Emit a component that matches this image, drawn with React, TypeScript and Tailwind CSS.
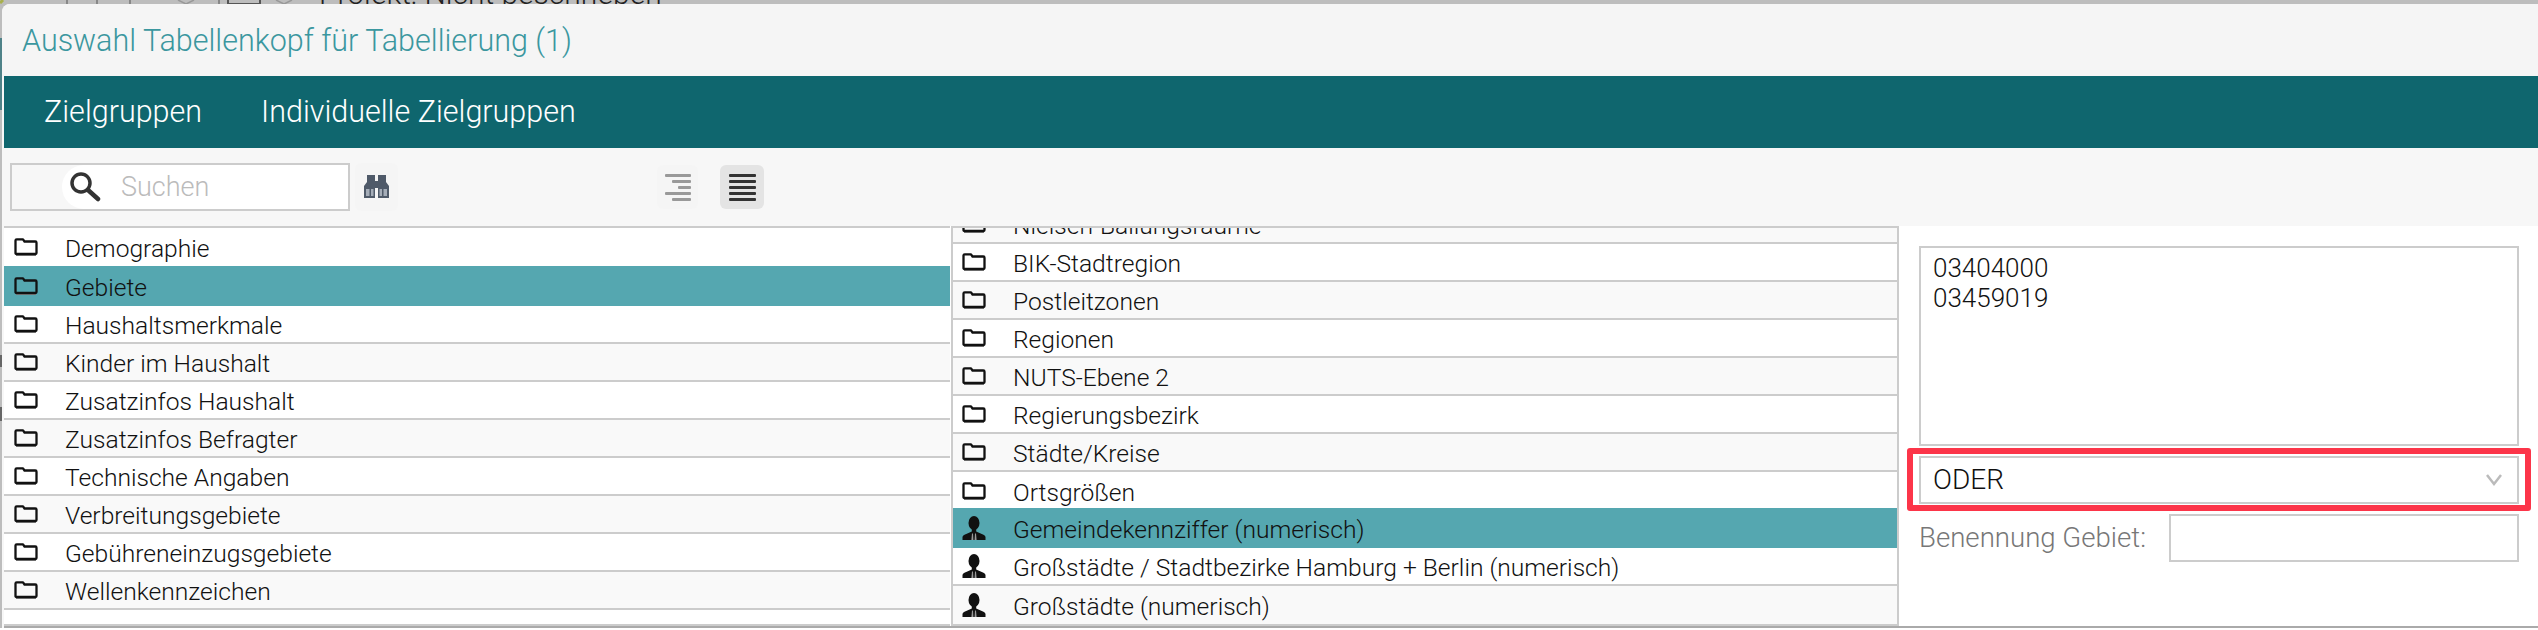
const font = "font-['Roboto','Liberation_Sans',sans-serif] font-light";

function Folder() {
  return (
    <svg width="24" height="18" viewBox="0 0 24 18" className="shrink-0" fill="none">
      <path d="M2 17.300H22" stroke="#8a8a8a" strokeWidth="1.400" />
      <path d="M1.500 15V2.500Q1.500 1.300 2.700 1.300H9L10.500 3.500H21.300Q22.500 3.500 22.500 4.700V15Q22.500 16 21.500 16H2.500Q1.500 16 1.500 15Z" stroke="#111" strokeWidth="2.300" strokeLinejoin="round" />
    </svg>
  );
}

function Person() {
  return (
    <svg width="24" height="24" viewBox="0 0 24 24" className="shrink-0" fill="#111">
      <ellipse cx="12" cy="7" rx="5.500" ry="7" />
      <path d="M9.800 12h4.400v3.500l5 2.200c2.700 1.100 4.300 2 4.300 3.300v3H.5v-3c0-1.300 1.600-2.200 4.300-3.300l5-2.200Z" />
      <path d="M10 17.500h1l.4 6.500h-2ZM13 17.500h1l.6 6.500h-2Z" fill="#9a9a9a" />
    </svg>
  );
}

function Row({ label, kind, selected, alt, last, clipped, overlap, inset }: { label: string; kind: "folder" | "person"; selected?: boolean; alt?: boolean; last?: boolean; clipped?: boolean; overlap?: boolean; inset?: boolean }) {
  const rowClass = selected
    ? "h-[40px] bg-[#55a7b0]"
    : `h-[38px] ${last ? "" : "border-b-2 border-[#cccccc]"} ${alt ? "bg-[#f9f9f9]" : "bg-white"}`;
  return (
    <div className={`flex shrink-0 items-center gap-[27px] text-[24.6px] leading-none text-[#111] ${inset ? "pl-[9px]" : "pl-[10px]"} ${rowClass} ${clipped ? "-mt-[22px]" : ""} ${overlap ? "-mt-[2px]" : ""}`}>
      {kind === "folder" ? <Folder /> : <Person />}
      <span className="whitespace-nowrap pt-[5px]">{label}</span>
    </div>
  );
}

function Binoculars() {
  return (
    <svg width="27" height="26" viewBox="0 0 27 26" fill="#4f5a69">
      <path d="M4 1h8v6h3V1h8v7l3 4v12H15V14h-3v10H1V12l3-4Z" />
      <path d="M3 15h3.500v7H3ZM8 15h2.500v7H8ZM16.500 15H19v7h-2.500ZM20.500 15H24v7h-3.500Z" fill="#a5adb8" />
    </svg>
  );
}

function Lines({ starts, color }: { starts: string[]; color: string }) {
  return (
    <div className="flex w-[27px] flex-col items-end gap-[3px]">
      {starts.map((w, i) => (
        <div key={i} className={`h-[3px] rounded-[1px] ${w} ${color}`} />
      ))}
    </div>
  );
}

const leftRows = [
  "Haushaltsmerkmale",
  "Kinder im Haushalt",
  "Zusatzinfos Haushalt",
  "Zusatzinfos Befragter",
  "Technische Angaben",
  "Verbreitungsgebiete",
  "Gebühreneinzugsgebiete",
  "Wellenkennzeichen",
];

const midRows = ["BIK-Stadtregion", "Postleitzonen", "Regionen", "NUTS-Ebene 2", "Regierungsbezirk", "Städte/Kreise"];

export default function App() {
  return (
    <div className={`flex h-[630px] w-[2538px] flex-col overflow-hidden bg-[#bdbdbd] ${font}`}>
      {/* window behind the dialog, only its lowest pixels show */}
      <div className="flex h-[4px] shrink-0 items-start overflow-hidden">
        <svg width="319" height="4" viewBox="0 0 319 4" className="shrink-0" fill="none" stroke="#777" strokeWidth="1.500">
          <path d="M0 3L3 0" stroke="#a8b04c" strokeWidth="3" />
          <path d="M67 0V4M97 0V4M130 0V4M219 0V4" />
          <path d="M178 0l8 4 8-4M276 0l8 4 8-4" stroke="#999" />
          <path d="M228 0V4H260V0" stroke="#555" strokeWidth="2" />
        </svg>
        <span className="-mt-[21px] whitespace-nowrap text-[30px] leading-[30px] text-[#222]">Projekt: Nicht beschrieben</span>
      </div>
      <div className="flex flex-1 overflow-hidden">
        <div className="flex w-[2px] shrink-0 flex-col">
          <div className="mt-[34px] h-[72px] bg-[#4f8288]" />
          <div className="mt-[245px] h-[12px] bg-[#666666]" />
          <div className="mt-[40px] h-[14px] bg-[#666666]" />
        </div>
        <div className="flex flex-1 flex-col overflow-hidden rounded-tl-[8px] bg-[#f7f7f7] pl-[2px]">
          <div className="-ml-[2px] flex h-[72px] shrink-0 items-center bg-[#f5f5f5] pl-[20px] pt-[2px] text-[30.500px] text-[#3b979f]">Auswahl Tabellenkopf für Tabellierung (1)</div>
          <div className="flex h-[72px] shrink-0 items-center gap-[59px] bg-[#0f666e] pl-[40px] text-[30.500px] text-white">
            <span>Zielgruppen</span>
            <span>Individuelle Zielgruppen</span>
          </div>
          <div className="flex h-[78px] shrink-0 items-center bg-[#f7f7f7] pl-[6px]">
            <div className="flex h-[48px] w-[340px] items-stretch border-2 border-[#cccccc] bg-[#f7f7f7]">
              <div className="ml-[50px] flex flex-1 items-center gap-[20px] rounded-l-[24px] bg-white pl-[7px] text-[27px] text-[#bbbbbb]">
                <svg width="32" height="32" viewBox="0 0 32 32" fill="none" stroke="#333">
                  <circle cx="12" cy="12" r="9" strokeWidth="3.500" />
                  <path d="M19 19l10 9" strokeWidth="4.500" strokeLinecap="round" />
                </svg>
                <span>Suchen</span>
              </div>
            </div>
            <div className="ml-[5px] flex h-[48px] w-[43px] items-center justify-center rounded-[6px] bg-[#f5f5f5]">
              <Binoculars />
            </div>
            <div className="ml-[259px] flex h-[44px] w-[41px] items-center justify-center rounded-[6px] bg-[#f5f5f5]">
              <Lines starts={["w-[26px]", "w-[19px]", "w-[13px]", "w-[26px]", "w-[19px]"]} color="bg-[#999999]" />
            </div>
            <div className="ml-[22px] flex h-[44px] w-[44px] items-center justify-center rounded-[6px] bg-[#e4e4e4]">
              <Lines starts={["w-[27px]", "w-[27px]", "w-[27px]", "w-[27px]", "w-[27px]"]} color="bg-[#333333]" />
            </div>
          </div>
          <div className="flex h-[402px] shrink-0 border-b-2 border-[#aaaaaa] bg-white">
            <div className="flex w-[946px] shrink-0 flex-col overflow-hidden border-y-2 border-[#cccccc]">
              <Row label="Demographie" kind="folder" last />
              <Row label="Gebiete" kind="folder" selected />
              {leftRows.map((label, i) => (
                <Row key={label} label={label} kind="folder" alt={i % 2 === 1} />
              ))}
            </div>
            <div className="ml-[1px] flex w-[948px] shrink-0 flex-col overflow-hidden border-2 border-[#cccccc]">
              <Row label="Nielsen-Ballungsräume" kind="folder" alt clipped inset />
              {midRows.map((label, i) => (
                <Row key={label} label={label} kind="folder" alt={i % 2 === 1} inset />
              ))}
              <Row label="Ortsgrößen" kind="folder" last inset />
              <Row label="Gemeindekennziffer (numerisch)" kind="person" selected overlap inset />
              <Row label="Großstädte / Stadtbezirke Hamburg + Berlin (numerisch)" kind="person" inset />
              <Row label="Großstädte (numerisch)" kind="person" alt last inset />
            </div>
            <div className="flex flex-1 flex-col pl-[20px] pr-[19px] pt-[20px] text-[26px] leading-[30px] text-[#111]">
              <div className="h-[200px] border-2 border-[#cccccc] px-[12px] pt-[5px]">
                <div>03404000</div>
                <div>03459019</div>
              </div>
              <div className="-mx-[12px] mt-[2px] h-[63px] rounded-[3px] border-[6px] border-[#fc3549] px-[6px] pt-[2px]">
                <div className="flex h-[48px] items-center justify-between border-2 border-[#cccccc] pl-[12px] pr-[14px] text-[28px]">
                  <span>ODER</span>
                  <svg width="18" height="14" viewBox="0 0 18 14" fill="none" stroke="#bbbbbb" strokeWidth="2.500">
                    <path d="M2 2l7 9 7-9" />
                  </svg>
                </div>
              </div>
              <div className="mt-[3px] flex items-center justify-between">
                <span className="text-[27.600px] text-[#777777]">Benennung Gebiet:</span>
                <div className="h-[48px] w-[350px] border-2 border-[#cccccc]" />
              </div>
            </div>
          </div>
        </div>
      </div>
      <div className="h-[2px] shrink-0 bg-white" />
    </div>
  );
}
